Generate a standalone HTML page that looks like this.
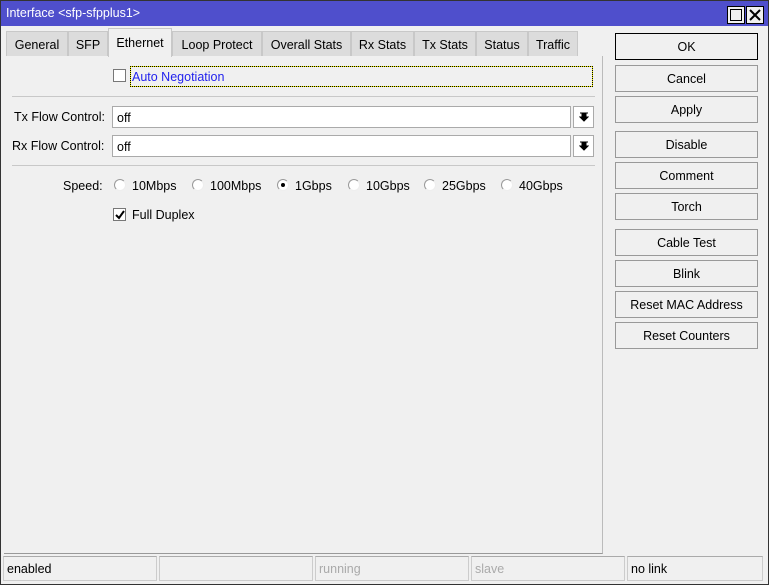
<!DOCTYPE html>
<html><head><style>
*{box-sizing:border-box;margin:0;padding:0}
body{width:769px;height:585px;background:#f0f0f0;font-family:"Liberation Sans",sans-serif;font-size:12.5px;color:#000;position:relative;overflow:hidden}
.a{position:absolute}
.title{left:0;top:0;width:769px;height:26px;background:#4f4fcc;color:#fff;padding:6px 0 0 6px;font-size:12.5px}
.wb{top:6px;width:18px;height:18px;background:#f0f0f0;border:1px solid #000}
.tab{top:31px;height:25px;background:#dcdcdc;border:1px solid #c8c8c8;border-bottom:none;text-align:center;padding-top:6px}
.tab.on{top:28px;height:29px;background:#f0f0f0;padding-top:7px}
.btn{left:615px;width:143px;height:27px;border:1px solid #999;background:#f0f0f0;text-align:center;padding-top:6px}
.inp{height:22px;background:#fff;border:1px solid #aaa;padding:4px 4px}
.dd{width:21px;height:22px;border:1px solid #aaa;background:#fff}
.sep{left:12px;width:583px;height:1px;background:#c8c8c8}
.cb{width:13px;height:13px;border:1px solid #777;background:#fff}
.rd{width:12px;height:12px;border-radius:50%;border:1px solid #999;border-right-color:#eee;border-bottom-color:#eee;background:#fff}
.st{top:556px;height:25px;border:1px solid #ccc;border-top-color:#aaa;padding:5px 3px;background:#f0f0f0}
</style></head><body>
<div class="a" style="left:0;top:0;width:769px;height:585px;border:1px solid #333;z-index:5;pointer-events:none"></div>
<div class="a title">Interface &lt;sfp-sfpplus1&gt;</div>
<div class="a wb" style="left:727px"><div class="a" style="left:2px;top:2px;width:12px;height:12px;border:1px solid #000"></div></div>
<div class="a wb" style="left:746px"><svg class="a" style="left:1px;top:1px" width="14" height="14"><path d="M2 2L12 12M12 2L2 12" stroke="#000" stroke-width="2"/></svg></div>

<div class="a" style="left:4px;top:56px;width:599px;height:498px;border-right:1px solid #bbb;border-bottom:1px solid #999"></div>
<div class="a tab" style="left:6px;width:62px">General</div>
<div class="a tab" style="left:68px;width:40px">SFP</div>
<div class="a tab on" style="left:108px;width:64px">Ethernet</div>
<div class="a tab" style="left:172px;width:90px">Loop Protect</div>
<div class="a tab" style="left:262px;width:89px">Overall Stats</div>
<div class="a tab" style="left:351px;width:63px">Rx Stats</div>
<div class="a tab" style="left:414px;width:62px">Tx Stats</div>
<div class="a tab" style="left:476px;width:52px">Status</div>
<div class="a tab" style="left:528px;width:50px">Traffic</div>

<div class="a cb" style="left:113px;top:69px"></div>
<div class="a" style="left:130px;top:66px;width:463px;height:21px;border:1px dotted #000;background:linear-gradient(#f0f0f0,#f0f0f0) padding-box,#ee0 border-box;color:#2222ee;padding:3px 1px">Auto Negotiation</div>
<div class="a sep" style="top:96px"></div>
<div class="a" style="left:14px;top:110px">Tx Flow Control:</div>
<div class="a inp" style="left:112px;top:106px;width:459px">off</div>
<div class="a dd" style="left:573px;top:106px"><svg class="a" style="left:5px;top:5px" width="10" height="10"><path d="M1 1H9M3 2H7V5H9L5 9L1 5H3Z" fill="#000" stroke="#000" stroke-width="1"/></svg></div>
<div class="a" style="left:12px;top:139px">Rx Flow Control:</div>
<div class="a inp" style="left:112px;top:135px;width:459px">off</div>
<div class="a dd" style="left:573px;top:135px"><svg class="a" style="left:5px;top:5px" width="10" height="10"><path d="M1 1H9M3 2H7V5H9L5 9L1 5H3Z" fill="#000" stroke="#000" stroke-width="1"/></svg></div>
<div class="a sep" style="top:165px"></div>

<div class="a" style="left:63px;top:179px">Speed:</div>
<div class="a rd" style="left:114px;top:179px"></div><div class="a" style="left:132px;top:179px">10Mbps</div>
<div class="a rd" style="left:192px;top:179px"></div><div class="a" style="left:210px;top:179px">100Mbps</div>
<div class="a rd" style="left:277px;top:179px"><div class="a" style="left:3px;top:3px;width:4px;height:4px;border-radius:50%;background:#000"></div></div><div class="a" style="left:295px;top:179px">1Gbps</div>
<div class="a rd" style="left:348px;top:179px"></div><div class="a" style="left:366px;top:179px">10Gbps</div>
<div class="a rd" style="left:424px;top:179px"></div><div class="a" style="left:442px;top:179px">25Gbps</div>
<div class="a rd" style="left:501px;top:179px"></div><div class="a" style="left:519px;top:179px">40Gbps</div>
<div class="a cb" style="left:113px;top:208px"><svg class="a" style="left:1px;top:1px" width="10" height="10"><path d="M1 5L4 8L9 1" stroke="#000" stroke-width="2" fill="none"/></svg></div>
<div class="a" style="left:132px;top:208px">Full Duplex</div>

<div class="a btn" style="top:33px;border-color:#000">OK</div>
<div class="a btn" style="top:65px">Cancel</div>
<div class="a btn" style="top:96px">Apply</div>
<div class="a btn" style="top:131px">Disable</div>
<div class="a btn" style="top:162px">Comment</div>
<div class="a btn" style="top:193px">Torch</div>
<div class="a btn" style="top:229px">Cable Test</div>
<div class="a btn" style="top:260px">Blink</div>
<div class="a btn" style="top:291px">Reset MAC Address</div>
<div class="a btn" style="top:322px">Reset Counters</div>

<div class="a st" style="left:3px;width:154px">enabled</div>
<div class="a st" style="left:159px;width:154px"></div>
<div class="a st" style="left:315px;width:154px;color:#aaa">running</div>
<div class="a st" style="left:471px;width:154px;color:#aaa">slave</div>
<div class="a st" style="left:627px;width:136px">no link</div>
</body></html>
